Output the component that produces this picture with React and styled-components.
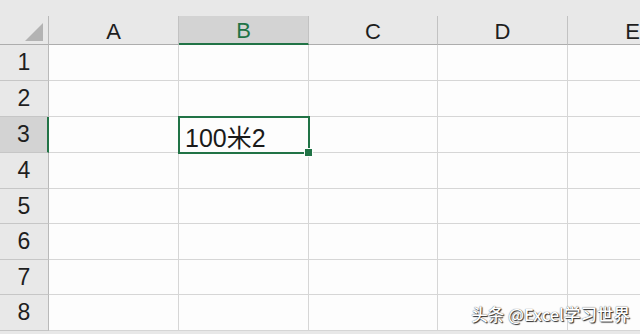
import React from 'react';
import styled, { createGlobalStyle } from 'styled-components';

const GlobalStyle = createGlobalStyle`
    html, body {
        margin: 0;
        padding: 0;
        background: #fdfdfd;
        overflow: hidden;
    }
`;

const Sheet = styled.div`
    position: relative;
    width: 640px;
    height: 334px;
    overflow: hidden;
    font-family: "Liberation Sans", Arial, "Noto Sans CJK SC", sans-serif;
    background: #e8e8e8;
`;

const TopBand = styled.div`
    height: 16px;
    background: #e8e8e8;
`;

const Grid = styled.div`
    display: grid;
    width: 698px;
    grid-template-columns: 49px 130px 130px 129px 130px 130px;
    grid-template-rows: 29px 36px 36px 36px 36px 35px 36px 35px 36px;
`;

const Corner = styled.div`
    position: relative;
    background: #e8e8e8;
    border-right: 1px solid #b9b9b9;
    border-bottom: 1px solid #adadad;
    &::after {
        content: '';
        position: absolute;
        right: 5px;
        bottom: 3px;
        width: 0;
        height: 0;
        border-left: 18px solid transparent;
        border-bottom: 18px solid #b3b3b3;
    }
`;

const ColHead = styled.div`
    display: flex;
    align-items: center;
    justify-content: center;
    padding-top: 3px;
    box-sizing: border-box;
    font-size: 22px;
    color: ${p => (p.$active ? '#217346' : '#1e1e1e')};
    background: ${p => (p.$active ? '#d3d3d3' : '#e8e8e8')};
    border-right: 1px solid #c2c2c2;
    border-bottom: ${p => (p.$active ? '2px solid #217346' : '1px solid #adadad')};
`;

const RowHead = styled.div`
    display: flex;
    align-items: center;
    justify-content: center;
    font-size: 23px;
    color: #1e1e1e;
    background: ${p => (p.$active ? '#d3d3d3' : '#e8e8e8')};
    border-right: ${p => (p.$active ? '2px solid #217346' : '1px solid #b9b9b9')};
    border-bottom: 1px solid #c6c6c6;
`;

const Cell = styled.div`
    position: relative;
    display: flex;
    align-items: center;
    padding-left: 6px;
    padding-top: 3px;
    box-sizing: border-box;
    font-size: 25px;
    color: #1a1a1a;
    background: #fdfdfd;
    border-right: 1px solid #d6d6d6;
    border-bottom: 1px solid #d6d6d6;
    ${p => p.$selected && `
        z-index: 2;
        outline: 2px solid #217346;
        outline-offset: -1px;
        &::after {
            content: '';
            position: absolute;
            right: -5px;
            bottom: -5px;
            width: 7px;
            height: 7px;
            background: #217346;
            border: 1px solid #fdfdfd;
        }
    `}
`;

const Watermark = styled.div`
    position: absolute;
    right: 10px;
    bottom: 8px;
    font-family: "Noto Sans CJK SC", "Liberation Sans", sans-serif;
    font-size: 16.5px;
    font-weight: 500;
    color: #ffffff;
    text-shadow: 1px 1px 1px #2a2a2a, 0 0 1px #444;
`;

const columns = ['A', 'B', 'C', 'D', 'E'];
const rows = [1, 2, 3, 4, 5, 6, 7, 8];

const App = () => {
    return (
        <React.Fragment>
            <GlobalStyle />
            <Sheet>
                <TopBand />
                <Grid>
                    <Corner />
                    {columns.map(c => (
                        <ColHead key={c} $active={c === 'B'}>{c}</ColHead>
                    ))}
                    {rows.map(r => (
                        <React.Fragment key={r}>
                            <RowHead $active={r === 3}>{r}</RowHead>
                            {columns.map(c => {
                                const sel = r === 3 && c === 'B';
                                return (
                                    <Cell key={c} $selected={sel}>
                                        {sel ? '100米2' : ''}
                                    </Cell>
                                );
                            })}
                        </React.Fragment>
                    ))}
                </Grid>
                <Watermark>头条 @Excel学习世界</Watermark>
            </Sheet>
        </React.Fragment>
    );
};

export default App;
